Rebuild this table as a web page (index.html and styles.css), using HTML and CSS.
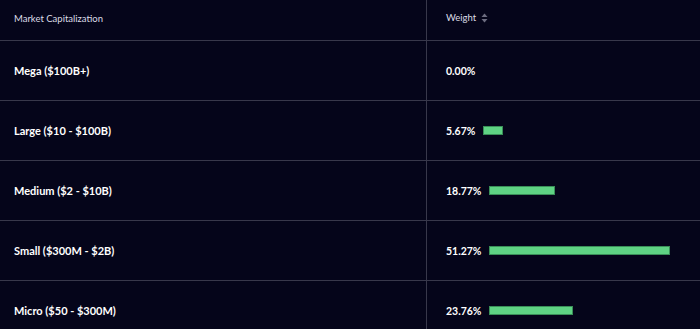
FILE: index.html
```html
<!DOCTYPE html>
<html>
<head>
<meta charset="utf-8">
<link rel="stylesheet" href="styles.css">
</head>
<body>
<div class="table">
  <div class="row head">
    <div class="cell c1">Market Capitalization</div>
    <div class="cell c2">Weight
      <svg class="sort" width="7" height="10" viewBox="0 0 7 10"><path d="M3.5 0.5 L6.5 4 L0.5 4 Z" fill="#6d6d80"/><path d="M3.5 9.5 L6.5 6 L0.5 6 Z" fill="#6d6d80"/></svg>
    </div>
  </div>
  <div class="row">
    <div class="cell c1 lbl">Mega ($100B+)</div>
    <div class="cell c2 val"><span class="pct">0.00%</span></div>
  </div>
  <div class="row">
    <div class="cell c1 lbl">Large ($10 - $100B)</div>
    <div class="cell c2 val"><span class="pct">5.67%</span><span class="bar" style="width:20px"></span></div>
  </div>
  <div class="row">
    <div class="cell c1 lbl">Medium ($2 - $10B)</div>
    <div class="cell c2 val"><span class="pct">18.77%</span><span class="bar" style="width:66px"></span></div>
  </div>
  <div class="row">
    <div class="cell c1 lbl">Small ($300M - $2B)</div>
    <div class="cell c2 val"><span class="pct">51.27%</span><span class="bar" style="width:181px"></span></div>
  </div>
  <div class="row">
    <div class="cell c1 lbl">Micro ($50 - $300M)</div>
    <div class="cell c2 val"><span class="pct">23.76%</span><span class="bar" style="width:84px"></span></div>
  </div>
</div>
</body>
</html>
```
FILE: styles.css
```css
html, body {
  margin: 0;
  padding: 0;
  background: #05051a;
  height: 100%;
}
body {
  font-family: Lato, "Liberation Sans", sans-serif;
  color: #ffffff;
}
.table {
  display: flex;
  flex-direction: column;
  width: 700px;
  height: 329px;
  overflow: hidden;
}
.row {
  display: grid;
  grid-template-columns: 427px 1fr;
  height: 60px;
  box-sizing: border-box;
  border-bottom: 1px solid #38384b;
  flex-shrink: 0;
}
.row.head {
  height: 41px;
}
.cell {
  display: flex;
  align-items: center;
}
.c1 {
  padding-left: 14px;
  border-right: 1px solid #38384b;
}
.c2 {
  padding-left: 19px;
}
.head .cell {
  font-size: 9.5px;
  color: #dcdce6;
  align-items: flex-start;
  padding-top: 13px;
}
.head .c2 {
  padding-top: 12px;
}
.sort {
  margin-left: 5px;
  margin-top: 1px;
}
.lbl {
  font-size: 11px;
  font-weight: 700;
}
.val {
  font-size: 10.5px;
  font-weight: 700;
}
.pct {
  margin-right: 8px;
}
.bar {
  display: inline-block;
  height: 9px;
  box-sizing: border-box;
  background: #5fd384;
  border: 1px solid #3a8f58;
}
```
